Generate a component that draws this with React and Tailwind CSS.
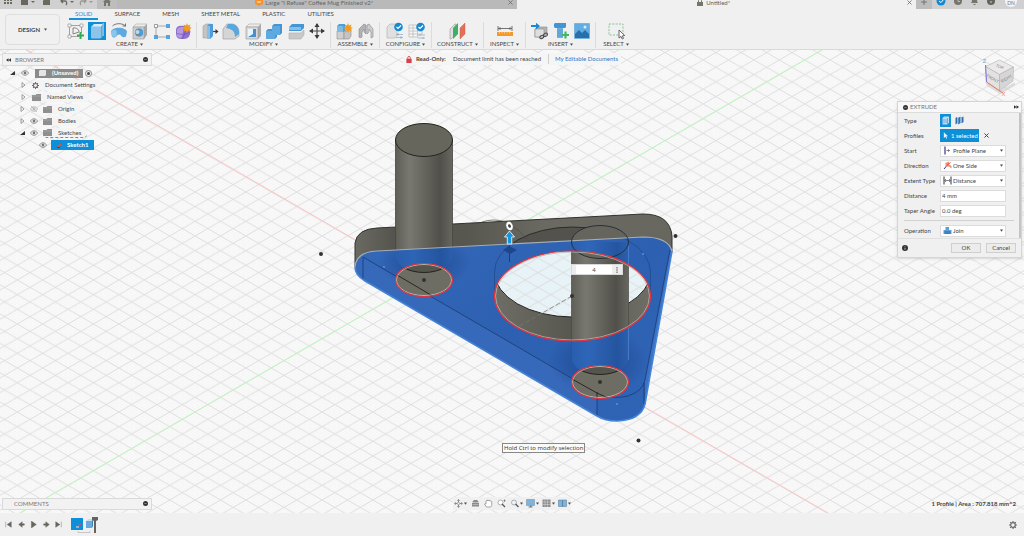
import React from "react";

const ICON = "h-[18px] w-[18px] shrink-0";

function Svg({ children, size = ICON, box = "0 0 18 18" }) {
  return (
    <svg viewBox={box} className={size} fill="none" aria-hidden="true">
      {children}
    </svg>
  );
}

function Caret() {
  return (
    <svg viewBox="0 0 4 3" className="h-[3px] w-[3px] shrink-0" aria-hidden="true">
      <path d="M0 0h4L2 3z" fill="#4b4b4b" />
    </svg>
  );
}

function Cross() {
  return (
    <svg viewBox="0 0 5 5" className="h-[5px] w-[5px]" aria-hidden="true">
      <path d="M.5.500l4 4M4.500.500l-4 4" stroke="#6b6860" strokeWidth=".8" />
    </svg>
  );
}

/* ---- ribbon icons ---- */
const icons = {
  sketch: (
    <Svg>
      <path d="M2.500 3.500v11M1 14.500h11M1 3.500h14M14.500 2v9" stroke="#8f8f8f" strokeWidth=".8" />
      <path d="M1 2h3v3H1zM13 2h3v3h-3zM1 13h3v3H1z" fill="#fafafa" stroke="#8a8a8a" strokeWidth=".6" />
      <path d="M6 12V6c3-.5 6 1 6 4z" stroke="#7b7b7b" strokeWidth=".9" />
      <path d="M13.500 10v7M10 13.500h7" stroke="#35a853" strokeWidth="2" />
    </Svg>
  ),
  extrude: (
    <Svg>
      <path d="M3 5l3-3h9l-2 3z" fill="#d8ecf9" />
      <path d="M13 5l2-3v12l-2 2.500z" fill="#5fa6d8" />
      <rect x="3" y="4.500" width="10" height="12" rx="1" fill="#8cc4ea" />
      <path d="M15.200 1v13" stroke="#eef7fd" strokeWidth=".7" />
    </Svg>
  ),
  revolve: (
    <Svg>
      <path d="M1 9.500C2 5 15 4 17 9.500l-1 5c-2 1-4 1-5-1-1-1.500-3-1.500-4 0-1 2-4 3-5 1z" fill="#5fa9de" />
      <path d="M1 10c2-3 5-3 6 0l-1 5-4-.5z" fill="#8cc5ec" />
      <path d="M2.500 4c3-3 9-3 12.500-.5M15.500 4.500V1.500M15.500 4h-3" stroke="#666" strokeWidth=".9" />
    </Svg>
  ),
  hole: (
    <Svg>
      <path d="M2 5l3-3h11l-3 3z" fill="#ededed" stroke="#9b9b9b" strokeWidth=".5" />
      <path d="M13 5l3-3v11l-3 4z" fill="#a8a8a8" />
      <path d="M2 5h11v12H2z" fill="#cecece" stroke="#9b9b9b" strokeWidth=".6" />
      <circle cx="8" cy="10.500" r="4" fill="#6a8ba3" />
      <path d="M8 6.500a4 4 0 0 1 0 8c1-2 1-6 0-8z" fill="#4a9eda" />
      <circle cx="6.500" cy="10" r="2" fill="#b9dbf1" />
    </Svg>
  ),
  rectPattern: (
    <Svg>
      <path d="M3 4h12M3 4v11M3 15h12" stroke="#959595" strokeWidth=".8" />
      <path d="M1.500 2.500h3v3h-3z" fill="#fff" stroke="#777" strokeWidth=".7" />
      <path d="M13 2h4v4h-4zM1 13h4v4H1zM13 13h4v4h-4z" fill="#58a3dc" />
    </Svg>
  ),
  form: (
    <Svg>
      <path d="M2 8c0-4 4-5 8-4 5 0 7 3 6 8-1 5-5 5-9 5-5 0-5-4-5-9z" fill="#9170cf" />
      <path d="M3 8c1-3 4-3 7-3-1 3-1 8-3 11-5 0-4-4-4-8z" fill="#b49ae4" />
      <path d="M2 11c4 2 9 2 14-1M10 4c2 4 1 9-2 13" stroke="#6e4db0" strokeWidth=".6" />
      <path d="M13 1l1 2.400 2.600-1-1 2.600 2.400 1-2.400 1 1 2.500-2.600-1-1 2.500-1-2.500-2.500 1 1-2.500-2.500-1 2.500-1-1-2.600 2.500 1z" fill="#f39a20" />
    </Svg>
  ),
  pressPull: (
    <Svg>
      <path d="M2 4l3-2h5v14H2z" fill="#c4c4c4" stroke="#999" strokeWidth=".5" />
      <path d="M6 4l2-2h4v12l-3 3H6z" fill="#4b9cd8" />
      <path d="M6 4h3v13H6z" fill="#86c0e8" />
      <path d="M12 9.500h3" stroke="#444" strokeWidth="1.200" />
      <path d="M14.500 7l3 2.500-3 2.500z" fill="#333" />
    </Svg>
  ),
  fillet: (
    <Svg>
      <path d="M1 7l4-5h5c4 0 7 4 7 8v4l-4 3H1z" fill="#d5d5d5" stroke="#999" strokeWidth=".6" />
      <path d="M6 2h4c4 0 7 4 7 8v2l-4 3c0-5-2-8-9-9z" fill="#5aa6de" />
    </Svg>
  ),
  shell: (
    <Svg>
      <path d="M2 5l3-3h12l-3 3z" fill="#ededed" stroke="#999" strokeWidth=".5" />
      <path d="M14 5l3-3v12l-3 3z" fill="#aaa" />
      <path d="M2 5h12v12H2z" fill="#d9d9d9" stroke="#999" strokeWidth=".6" />
      <path d="M4 7h8v8H4z" fill="#468fc9" />
      <path d="M4 7h5v5l-5 3z" fill="#e9f4fb" />
    </Svg>
  ),
  combine: (
    <Svg>
      <path d="M7 4l2-2h8v9l-2 2h-3v2l-2 2H1V9l2-2h4z" fill="#4595d3" />
      <path d="M1 9h6V4h8v9h-5v4H1z" fill="#5eaae0" />
    </Svg>
  ),
  split: (
    <Svg>
      <path d="M2 5l3-3h12v4l-3 3H2z" fill="#4796d4" />
      <path d="M2 5h12v3H2z" fill="#85c0e9" />
      <path d="M1 10h13l3-3" stroke="#efefef" strokeWidth="1" />
      <path d="M2 11h12l3-3v5l-3 4H2z" fill="#c9c9c9" stroke="#a5a5a5" strokeWidth=".5" />
    </Svg>
  ),
  move: (
    <Svg>
      <path d="M9 2v14M2 9h14" stroke="#4b4b4b" strokeWidth="1.200" />
      <path d="M9 1l2.500 4h-5zM9 17l2.500-4h-5zM1 9l4-2.500v5zM17 9l-4-2.500v5z" fill="#3b3b3b" />
    </Svg>
  ),
  component: (
    <Svg>
      <path d="M2 9h7v8H2z" fill="#cfcfcf" stroke="#8f8f8f" strokeWidth=".6" />
      <path d="M9 9h5l2-2v7l-2 3H9z" fill="#c4c4c4" stroke="#8f8f8f" strokeWidth=".6" />
      <path d="M2 4l2-2h6v7l-2 1H2z" fill="#4f9fd9" />
      <path d="M2 4h6v6H2z" fill="#7bbbe7" />
      <path d="M13 1l1 2.400 2.600-1-1 2.600 2.400 1-2.400 1 1 2.500-2.600-1-1 2.500-1-2.500-2.500 1 1-2.500-2.500-1 2.500-1-1-2.600 2.500 1z" fill="#f39a20" />
    </Svg>
  ),
  joint: (
    <Svg>
      <path d="M2 15V7l5-5 2 1v9l-2-2V7l-2 3v5l-2 1z" fill="#b3b3b3" stroke="#868686" strokeWidth=".6" />
      <path d="M16 15V7l-4-5-2 1v9l2-2V7l2 3v6z" fill="#cdcdcd" stroke="#868686" strokeWidth=".6" />
    </Svg>
  ),
  config: (
    <Svg>
      <path d="M1 5l3-3h7v11l-2 3H1z" fill="#e0e0e0" stroke="#b5b5b5" strokeWidth=".7" />
      <circle cx="12.500" cy="5" r="4.300" fill="#1788d2" />
      <path d="M10.500 5l1.500 1.500 3-3" stroke="#fff" strokeWidth="1.200" />
      <path d="M10 12.500h7M10 15.500h7M12 11v3M15 14v3" stroke="#8ba6bb" strokeWidth=".7" />
    </Svg>
  ),
  configTable: (
    <Svg>
      <path d="M1 3h13v12H1z" fill="#f6f6f6" stroke="#b5b5b5" strokeWidth=".7" />
      <path d="M1 6h13M1 9h13M1 12h13M5 3v12M9.500 3v12" stroke="#b5b5b5" strokeWidth=".7" />
      <circle cx="12.500" cy="5" r="4.300" fill="#1788d2" />
      <path d="M10.500 5l1.500 1.500 3-3" stroke="#fff" strokeWidth="1.200" />
      <path d="M10 12.500h7v4h-7z" fill="#f0f0f0" />
      <path d="M10 13h7M10 16h7M12 12v2M15 15v2" stroke="#8ba6bb" strokeWidth=".7" />
    </Svg>
  ),
  plane: (
    <Svg>
      <path d="M1 7l5-5h1v10l-5 5H1z" fill="#e0e0e0" stroke="#999" strokeWidth=".6" />
      <path d="M4 6l5-5v11l-5 5z" fill="#3fae66" />
      <path d="M11 6l5-5v11l-5 5z" fill="#e07057" stroke="#c9573d" strokeWidth=".4" />
    </Svg>
  ),
  measure: (
    <Svg>
      <path d="M2 4v5M16 4v5M2 6.500h14" stroke="#666" strokeWidth=".9" />
      <path d="M4.500 5L2 6.500 4.500 8M13.500 5L16 6.500 13.500 8" fill="#666" />
      <path d="M1 10h16v4H1z" fill="#f39a2b" />
      <path d="M3.500 10v1.500M6 10v1.500M8.500 10v1.500M11 10v1.500M13.500 10v1.500" stroke="#fbe0bb" strokeWidth=".6" />
    </Svg>
  ),
  insert: (
    <Svg>
      <path d="M4 7l2-2h10v7l-3 3H4z" fill="#b5b5b5" stroke="#8a8a8a" strokeWidth=".6" />
      <path d="M4 7h9v8H4z" fill="#dedede" stroke="#8a8a8a" strokeWidth=".6" />
      <path d="M0 3h5V.8L9 4 5 7.200V5H0z" fill="#168ad6" />
      <ellipse cx="10.800" cy="15" rx="2.200" ry="1.500" stroke="#4b4b4b" strokeWidth="1" transform="rotate(-30 10.800 15)" />
      <ellipse cx="14.500" cy="12.800" rx="2.200" ry="1.500" stroke="#4b4b4b" strokeWidth="1" transform="rotate(-30 14.500 12.800)" />
    </Svg>
  ),
  fastener: (
    <Svg>
      <path d="M2 2l1-1h11v4l-1 1H3L2 5z" fill="#4394d3" />
      <path d="M5 6h6v10H5z" fill="#6cb2e2" />
      <path d="M5 8h6M5 10h6M5 12h6M5 14h6" stroke="#4a8fc2" strokeWidth=".6" />
      <path d="M13.500 9.500v7M10 13h7" stroke="#43b864" strokeWidth="2.200" />
    </Svg>
  ),
  image: (
    <Svg>
      <path d="M1.500 1.500h15v15h-15z" fill="#62aee3" stroke="#4d9bd3" strokeWidth=".5" />
      <path d="M2 12l4-4 3 3 3-3 4 4v4H2z" fill="#2670ad" />
      <circle cx="12" cy="5" r="1.500" fill="#d9edf9" />
    </Svg>
  ),
  select: (
    <Svg>
      <path d="M2 2h14v11H2z" stroke="#6fb681" strokeWidth=".8" strokeDasharray="2 1.300" />
      <path d="M12 8v8l2-1.600 1.300 2.600 1.200-.6-1.200-2.500 2.400-.4z" fill="#fff" stroke="#555" strokeWidth=".9" />
    </Svg>
  ),
};

const groups = [
  { name: "CREATE", box: "w-[134px]", strip: "w-[126px]", items: ["sketch", "extrude", "revolve", "hole", "rectPattern", "form"] },
  { name: "MODIFY", box: "w-[134px]", strip: "w-[126px]", items: ["pressPull", "fillet", "shell", "combine", "split", "move"] },
  { name: "ASSEMBLE", box: "w-[49px]", strip: "w-10", items: ["component", "joint"] },
  { name: "CONFIGURE", box: "w-[52px]", strip: "w-10", items: ["config", "configTable"] },
  { name: "CONSTRUCT", box: "w-[52px]", strip: "w-[18px]", items: ["plane"] },
  { name: "INSPECT", box: "w-[42px]", strip: "w-[18px]", items: ["measure"] },
  { name: "INSERT", box: "w-[70px]", strip: "w-[60px]", items: ["insert", "fastener", "image"] },
  { name: "SELECT", box: "w-[40px]", strip: "w-[18px]", items: ["select"] },
];

function TitleBar() {
  return (
    <header className="flex h-[9px] shrink-0 overflow-hidden bg-[#d0d0d0] text-[#5c5c5c]">
      <div className="flex h-[5px] w-[97px] shrink-0 items-center pl-1">
        <svg viewBox="0 0 93 8" className="h-2 w-[93px]" aria-hidden="true">
          <g fill="#6b6860">
            <path d="M0 0h2v2H0zM3 0h2v2H3zM6 0h2v2H6zM0 3h2v2H0zM3 3h2v2H3zM6 3h2v2H6z" />
            <path d="M17 0h7v6h-7zM27 2h4l-2 2zM40 0h6v6h-7V2z" />
            <path d="M66 2h4l-2 2z" />
          </g>
          <path d="M57 2h4c2 0 2 3 1 4M59 0l-2 2 2 2" stroke="#6b6860" strokeWidth="1.300" fill="none" />
          <path d="M82 2h-4c-2 0-2 3-1 4M80 0l2 2-2 2" stroke="#9a9893" strokeWidth="1.300" fill="none" />
          <path d="M85 2h4l-2 2z" fill="#9a9893" />
        </svg>
      </div>
      <button aria-label="Home" className="flex h-[9px] w-5 shrink-0 justify-center bg-[#bdbdbd]">
        <svg viewBox="0 0 8 6" className="h-[6px] w-2" aria-hidden="true">
          <path d="M4 -2l4 4H7v4H5V3H3v3H1V2H0z" fill="#77746e" />
        </svg>
      </button>
      <div className="flex h-[9px] flex-1 bg-[#b9b9b9] px-1">
        <span className="flex h-[5px] flex-1 items-center justify-center gap-[2px] text-[#66635d]">
          <svg viewBox="0 0 8 8" className="h-2 w-2" aria-hidden="true">
            <path d="M0 1l4-2 4 2v4L4 7 0 5z" fill="#f5922e" />
            <path d="M2 2h4v2H2z" fill="#ffc27e" />
          </svg>
          Large "I Refuse" Coffee Mug Finished v2*
        </span>
        <button aria-label="Close tab" className="flex h-[5px] items-center"><Cross /></button>
      </div>
      <div className="flex h-[9px] flex-1 bg-[#f0f0f0] px-1">
        <span className="flex h-[5px] flex-1 items-center justify-center gap-[3px]">
          <svg viewBox="0 0 6 8" className="h-2 w-[6px]" aria-hidden="true">
            <path d="M0 3h6v4H0z" fill="#77746e" />
            <path d="M1.500 3V1.500a1.500 1.500 0 0 1 3 0V3" stroke="#77746e" fill="none" />
          </svg>
          Untitled*
        </span>
        <button aria-label="Close tab" className="flex h-[5px] items-center"><Cross /></button>
      </div>
      <button aria-label="New tab" className="flex h-[9px] w-4 shrink-0 justify-center bg-[#bdbdbd]">
        <svg viewBox="0 0 6 5" className="h-[5px] w-[6px]" aria-hidden="true">
          <path d="M3 -1v6M0 2h6" stroke="#77746e" strokeWidth="1" />
        </svg>
      </button>
      <svg viewBox="0 0 92 9" className="h-[9px] w-[92px] shrink-0" aria-hidden="true">
        <circle cx="9" cy="1" r="4.500" fill="#1788d2" />
        <path d="M7 1l2 1.500L12-1" stroke="#fff" fill="none" />
        <circle cx="26" cy="1" r="4" fill="#77746e" />
        <path d="M26-1v2.500h2" stroke="#d0d0d0" fill="none" strokeWidth=".8" />
        <path d="M39 3c1-1 1-3 1-5h5c0 2 0 4 1 5zM41.500 4h2v1h-2z" fill="#77746e" />
        <circle cx="59" cy="1" r="4" fill="#66635d" />
        <path d="M59 1v2" stroke="#d0d0d0" />
        <circle cx="79" cy="1" r="6" fill="#f3f3f3" />
        <text x="79" y="5" fontSize="5" textAnchor="middle" fill="#77746e">DN</text>
      </svg>
    </header>
  );
}

function Ribbon() {
  const tabs = ["SOLID", "SURFACE", "MESH", "SHEET METAL", "PLASTIC", "UTILITIES"];
  return (
    <div className="flex h-[41px] shrink-0 gap-[3px] border-b border-[#d9d9d9] bg-[#f0f0f0] pl-[5px]">
      <button className="mt-[5px] flex h-[31px] w-[55px] shrink-0 items-center justify-center gap-1 rounded-sm border border-[#dedede] font-bold">
        DESIGN <Caret />
      </button>
      <div className="flex flex-1 flex-col">
        <nav className="flex h-[11px] gap-[10px] pl-[6px]">
          {tabs.map((t, i) => (
            <a
              key={t}
              href="#"
              className={
                i === 0
                  ? "flex items-center border-b-2 border-[#1690d8] px-[6px] text-[#1690d8]"
                  : "flex items-center border-b-2 border-transparent px-[6px]"
              }
            >
              {t}
            </a>
          ))}
        </nav>
        <div className="flex pt-[2px]">
          {groups.map((g, i) => (
            <section
              key={g.name}
              className={
                (i < groups.length - 1 ? "border-r border-[#dcdcdc] " : "") +
                "flex h-[26px] shrink-0 flex-col items-center " +
                g.box
              }
            >
              <div className={"flex justify-between " + g.strip}>
                {g.items.map((n) => (
                  <button
                    key={n}
                    aria-label={n}
                    className={n === "extrude" ? "h-[18px] bg-[#0f8fd8]" : "h-[18px]"}
                  >
                    {icons[n]}
                  </button>
                ))}
              </div>
              <button className="flex h-2 items-center gap-[2px] whitespace-nowrap">
                {g.name} <Caret />
              </button>
            </section>
          ))}
        </div>
      </div>
    </div>
  );
}

function SceneDefs() {
  return (
    <defs>
      <pattern id="minor" patternUnits="userSpaceOnUse" x="17.300" y="309.300" width="5.080" height="2.934">
        <path d="M0 0l5.080 2.934M0 2.934L5.080 0" stroke="#eeeeee" strokeWidth=".4" />
      </pattern>
      <pattern id="major" patternUnits="userSpaceOnUse" x="17.300" y="309.300" width="25.400" height="14.670">
        <path d="M0 0l25.400 14.670M0 14.670L25.400 0" stroke="#dadada" strokeWidth=".9" />
      </pattern>
      <linearGradient id="cyl" x1="0" x2="1">
        <stop offset="0" stopColor="#5f5e57" />
        <stop offset=".25" stopColor="#787870" />
        <stop offset=".5" stopColor="#66655e" />
        <stop offset=".78" stopColor="#504f49" />
        <stop offset="1" stopColor="#67665f" />
      </linearGradient>
      <linearGradient id="cylBlue" x1="0" x2="1">
        <stop offset="0" stopColor="#2a5fb0" />
        <stop offset=".3" stopColor="#2f68ba" />
        <stop offset=".8" stopColor="#24549f" />
        <stop offset="1" stopColor="#2c5fae" />
      </linearGradient>
      <linearGradient id="plate" x1="0" x2="1">
        <stop offset="0" stopColor="#6b6a62" />
        <stop offset=".12" stopColor="#55544e" />
        <stop offset=".35" stopColor="#57564f" />
        <stop offset=".6" stopColor="#6b6a62" />
        <stop offset="1" stopColor="#68675f" />
      </linearGradient>
      <linearGradient id="face" x1="0" y1="0" x2="1" y2="1">
        <stop offset="0" stopColor="#3468b8" />
        <stop offset=".5" stopColor="#2d60b0" />
        <stop offset="1" stopColor="#2f64b6" />
      </linearGradient>
      <linearGradient id="rim" x1="0" x2="1">
        <stop offset="0" stopColor="#706f67" />
        <stop offset=".5" stopColor="#58574f" />
        <stop offset="1" stopColor="#706f67" />
      </linearGradient>
      <radialGradient id="shade">
        <stop offset=".5" stopColor="#1d478f" stopOpacity=".5" />
        <stop offset="1" stopColor="#1d478f" stopOpacity="0" />
      </radialGradient>
      <clipPath id="holeBig"><ellipse cx="572.500" cy="296" rx="78" ry="45" /></clipPath>
      <clipPath id="holeTop"><ellipse cx="572.500" cy="272" rx="78" ry="45" /></clipPath>
      <clipPath id="holeL"><ellipse cx="424" cy="280" rx="28.500" ry="16.500" /></clipPath>
      <clipPath id="holeR"><ellipse cx="600" cy="382" rx="28.500" ry="16.500" /></clipPath>
      <clipPath id="blueClip">
        <path d="M355 267Q356 252 377 251L643 237Q668 237 672 251L645 404Q641 420 617 421Q605 421 597 416L365 281Q355 275 355 267Z" />
      </clipPath>
      <clipPath id="grayClip">
        <path d="M355 243Q357 229 377 228L643 214Q670 214 672 236V260L643 237L377 251L355 267Z" />
      </clipPath>
    </defs>
  );
}

function Scene() {
  const blue = "M355 267Q356 252 377 251L643 237Q668 237 672 251L645 404Q641 420 617 421Q605 421 597 416L365 281Q355 275 355 267Z";
  return (
    <svg
      viewBox="0 50 1024 463"
      preserveAspectRatio="xMidYMid slice"
      className="absolute inset-0 h-full w-full"
      fill="none"
      role="img"
      aria-label="3D model view"
    >
      <SceneDefs />
      <rect y="50" width="1024" height="463" fill="#fbfbfb" />
      <rect y="50" width="1024" height="463" fill="url(#minor)" />
      <rect y="50" width="1024" height="463" fill="url(#major)" />
      <path d="M822 50L20 513" stroke="#bdf7bd" strokeWidth="1" />
      <path d="M27 50L828 513" stroke="#fbc4c4" strokeWidth="1" />

      {/* upper plate */}
      <path d="M355 267V243Q357 229 377 228L643 214Q670 214 672 236V252L600 270L377 262Z" fill="url(#plate)" />
      <g clipPath="url(#grayClip)">
        <ellipse cx="572.500" cy="272" rx="78" ry="45" fill="#53524c" stroke="#2d2c29" />
        <ellipse cx="600" cy="242" rx="28.500" ry="16.500" fill="#66655d" />
      </g>
      <path d="M355 267V243Q357 229 377 228L643 214Q670 214 672 236V252" stroke="#33322e" strokeWidth="1" />
      <path d="M482 222Q493 218 506 222Q520 229 529 242" stroke="#4a4a46" strokeWidth=".7" />

      {/* left post */}
      <path d="M395.500 140V252h57V140z" fill="url(#cyl)" />
      <path d="M395.500 140V252M452.500 140V252" stroke="#45443f" strokeWidth=".8" />
      <ellipse cx="424" cy="140" rx="28.500" ry="16.500" fill="#66665d" stroke="#24231f" />

      {/* selected lower face */}
      <path d={blue} fill="url(#face)" />
      <g clipPath="url(#blueClip)">
        <path d="M363 257L597 393L597 425L355 285V255Z" fill="#3769bb" />
        <path d="M645 380L670 250L680 240V430H645Z" fill="#3a72c6" />
        <ellipse cx="424" cy="262" rx="46" ry="28" fill="url(#shade)" />
        <ellipse cx="598" cy="362" rx="50" ry="34" fill="url(#shade)" />
        <path d="M395.500 240V256A28.500 16.500 0 0 0 452.500 256V240z" fill="url(#cylBlue)" opacity=".8" />
        <path d="M571.500 242V358A28.500 16.500 0 0 0 628.500 358V242z" fill="url(#cylBlue)" opacity=".9" />
        <path d="M628.500 245V360" stroke="#4b82cf" strokeWidth=".8" />
        <path d="M571.500 330V362" stroke="#24549f" strokeWidth=".6" />
        <path d="M494.500 296V272A78 45 0 0 1 650.500 272V296" stroke="#1d478a" strokeWidth=".7" />
        <path d="M363 257V281M363 257L597 393Q611 400 628 396Q643 391 645 380L670 250M597 392V417M644 383V404" stroke="#1b3b72" strokeWidth=".8" />
        <path d="M509.500 243V262" stroke="#1b3e7c" strokeWidth="1" />
        <path d="M503 250l6-4 8 4-7 4z" fill="#1d468d" />
      </g>
      <path d="M355 267Q356 252 377 251L643 237Q668 237 672 251" stroke="#a4aeb6" strokeWidth="1.200" />
      <path d="M672 251L645 404Q641 420 617 421Q605 421 597 416L365 281Q355 275 355 267" stroke="#4583d6" strokeWidth="1.600" />

      {/* large opening */}
      <g clipPath="url(#holeBig)">
        <rect x="490" y="245" width="165" height="100" fill="url(#rim)" />
        <g clipPath="url(#holeTop)">
          <rect x="490" y="245" width="165" height="80" fill="#e8f3f7" />
          <rect x="490" y="245" width="165" height="80" fill="url(#major)" />
        </g>
        <ellipse cx="572.500" cy="272" rx="78" ry="45" stroke="#24231f" />
        <path d="M571.500 242h57V345h-57z" fill="url(#cyl)" />
        <path d="M571.500 242V345M628.500 242V345" stroke="#4a4943" strokeWidth=".7" />
        <path d="M571.500 242A28.500 16.500 0 0 0 628.500 242z" fill="#66665d" />
      </g>
      <ellipse cx="600" cy="242" rx="28.500" ry="16.500" stroke="#222a33" strokeWidth=".9" />
      <path d="M572 296L516 328" stroke="#77776f" strokeWidth=".8" strokeDasharray="5 2" />
      <ellipse cx="572.500" cy="296" rx="77" ry="44" stroke="#b9b7b0" strokeWidth=".8" />
      <ellipse cx="572.500" cy="296" rx="78" ry="45" stroke="#e5323f" strokeWidth="1.200" />

      {/* small openings */}
      <g clipPath="url(#holeL)">
        <rect x="390" y="260" width="70" height="40" fill="#6e6d64" />
        <ellipse cx="424" cy="256" rx="28.500" ry="16.500" fill="#55544d" stroke="#24231f" />
        <path d="M397 275L436 298" stroke="#282723" />
      </g>
      <g clipPath="url(#holeR)">
        <rect x="565" y="360" width="70" height="40" fill="#6e6d64" />
        <ellipse cx="600" cy="358" rx="28.500" ry="16.500" fill="#55544d" stroke="#24231f" />
        <path d="M572 379L597 393L608 398M597 392V400" stroke="#282723" />
      </g>
      <g strokeWidth=".8" stroke="#c9c6be">
        <ellipse cx="424" cy="280" rx="27.500" ry="15.500" />
        <ellipse cx="600" cy="382" rx="27.500" ry="15.500" />
      </g>
      <g strokeWidth="1.200" stroke="#e5323f">
        <ellipse cx="424" cy="280" rx="28.500" ry="16.500" />
        <ellipse cx="600" cy="382" rx="28.500" ry="16.500" />
      </g>
      <g fill="#33322f">
        <circle cx="321" cy="254" r="2" />
        <circle cx="675.500" cy="236" r="2" />
        <circle cx="572" cy="296" r="2" />
        <circle cx="638.500" cy="440.500" r="2" />
        <circle cx="424" cy="280" r="2" />
        <circle cx="600" cy="382" r="2" />
      </g>
      <g fill="#5a92dd">
        <circle cx="384" cy="267" r="1" />
        <circle cx="643" cy="254" r="1" />
        <circle cx="617" cy="404" r="1" />
      </g>

      {/* manipulator */}
      <g transform="rotate(-20 509.500 226)">
        <ellipse cx="509.500" cy="226" rx="3.600" ry="4.800" fill="#fff" stroke="#444" strokeWidth=".6" />
        <ellipse cx="509.500" cy="226" rx="1.300" ry="1.900" fill="#44433f" />
      </g>
      <path d="M509.500 231l5 6h-2.800v7h-4.400v-7h-2.800z" fill="#1496e6" stroke="#fff" strokeWidth=".8" />
    </svg>
  );
}

function ViewCube() {
  return (
    <svg viewBox="0 0 38 44" className="h-[44px] w-[38px]" fill="none" aria-label="View cube">
      <path d="M6 29l15 9 15-9v3l-15 9L8 33z" fill="#c9c9c9" opacity=".6" />
      <path d="M20.500 7l14 7-14 7.500-14-8z" fill="#eaeaea" stroke="#b2b2b2" strokeWidth=".6" />
      <path d="M6.500 13.500l14 8V38l-13-9z" fill="#e2e2e2" stroke="#b2b2b2" strokeWidth=".6" />
      <path d="M34.500 14l-14 7.500V38L34 28z" fill="#d6d6d6" stroke="#b2b2b2" strokeWidth=".6" />
      <text x="20.500" y="15" fontSize="4" fill="#7d7d7d" textAnchor="middle" transform="rotate(25 20.500 14)">TOP</text>
      <text x="13.500" y="27" fontSize="4" fill="#7d7d7d" textAnchor="middle" transform="rotate(30 13.500 26)">FRONT</text>
      <text x="27.500" y="27" fontSize="4" fill="#7d7d7d" textAnchor="middle" transform="rotate(-30 27.500 26)">RIGHT</text>
      <path d="M7.500 29L6.500 12" stroke="#8a6be0" strokeWidth="1" />
      <path d="M7.500 29L24 40" stroke="#e8775c" strokeWidth="1" />
      <text x="3.500" y="10" fontSize="6" fill="#6ba7dd">Z</text>
      <text x="22.500" y="43" fontSize="6" fill="#f08c78">X</text>
    </svg>
  );
}

function Dot() {
  return (
    <svg viewBox="0 0 6 6" className="h-[5px] w-[5px] shrink-0" aria-hidden="true">
      <circle cx="3" cy="3" r="3" fill="#333" />
      <path d="M1.500 3h3" stroke="#ccc" strokeWidth=".6" />
    </svg>
  );
}

function Chevrons({ flip }) {
  return (
    <svg viewBox="0 0 6 4" className="h-[4px] w-[5px] shrink-0" aria-hidden="true">
      <path d={flip ? "M0 0l3 2-3 2zM3 0l3 2-3 2z" : "M3 0L0 2l3 2zM6 0L3 2l3 2z"} fill="#333" />
    </svg>
  );
}

function Arrow({ open }) {
  return (
    <svg viewBox="0 0 5 6" className="h-[6px] w-[5px] shrink-0" fill="none" aria-hidden="true">
      {open ? <path d="M5 1v4H0z" fill="#333" /> : <path d="M1 .5L4 3 1 5.500z" stroke="#888" strokeWidth=".8" />}
    </svg>
  );
}

function Eye({ off }) {
  return (
    <svg viewBox="0 0 8 6" className="h-[6px] w-2 shrink-0" fill="none" aria-hidden="true">
      <path d="M.5 3C2 0 6 0 7.500 3 6 6 2 6 .5 3z" stroke={off ? "#b5b5b5" : "#8a8a8a"} strokeWidth=".9" />
      <circle cx="4" cy="3" r="1.400" fill={off ? "#bbb" : "#777"} />
      {off && <path d="M1 0l6 6" stroke="#aaa" strokeWidth=".7" />}
    </svg>
  );
}

function Folder() {
  return (
    <svg viewBox="0 0 9 7" className="h-[7px] w-[9px] shrink-0" aria-hidden="true">
      <path d="M0 1h3.500l1-1H9v7H0z" fill="#8f8f8f" />
      <path d="M0 2h9" stroke="#b5b5b5" strokeWidth=".5" />
    </svg>
  );
}

function Gear({ size = "h-[7px] w-[7px] shrink-0" }) {
  return (
    <svg viewBox="0 0 8 8" className={size} fill="none" aria-hidden="true">
      <path d="M4 0v8M0 4h8M1.200 1.200l5.600 5.600M6.800 1.200L1.200 6.800" stroke="#6c6c6c" strokeWidth="1.200" />
      <circle cx="4" cy="4" r="2.300" fill="#f2f2f2" stroke="#6c6c6c" strokeWidth="1.200" />
    </svg>
  );
}

function Browser() {
  const row = "flex h-3 items-center";
  const label = "flex h-[10px] items-center rounded-sm bg-[#f4f4f4] pr-[6px]";
  return (
    <aside className="w-[150px]">
      <div className="flex h-[13px] items-center border border-[#dadada] bg-[#f2f2f2] px-[3px] text-[#777]">
        <Chevrons />
        <h2 className="flex-1 pl-1">BROWSER</h2>
        <Dot />
      </div>
      <ul className="pt-px">
        <li className={row + " gap-[6px] pl-2"}>
          <Arrow open />
          <Eye />
          <span className="flex h-[9px] items-center gap-[6px] bg-[#8b8b8b] pl-1 pr-[5px] font-bold text-white">
            <svg viewBox="0 0 7 6" className="h-[6px] w-[7px]" aria-hidden="true">
              <path d="M0 1l1-1h6v5L6 6H0z" fill="#e5e5e5" />
            </svg>
            (Unsaved)
          </span>
          <input type="radio" defaultChecked aria-label="Activate (Unsaved)" className="-ml-1 h-[7px] w-[7px] appearance-none rounded-full border border-[#888] bg-[#444] bg-clip-content p-px" />
        </li>
        <li className={row + " gap-[6px] pl-[19px]"}>
          <Arrow />
          <span className={label + " gap-[6px]"}><Gear />Document Settings</span>
        </li>
        <li className={row + " gap-[6px] pl-[19px]"}>
          <Arrow />
          <span className={label + " gap-[6px]"}><Folder />Named Views</span>
        </li>
        <li className={row + " gap-[5px] pl-[18px]"}>
          <Arrow />
          <Eye off />
          <span className={label + " gap-[6px]"}><Folder />Origin</span>
        </li>
        <li className={row + " gap-[5px] pl-[18px]"}>
          <Arrow />
          <Eye />
          <span className={label + " gap-[6px]"}><Folder />Bodies</span>
        </li>
        <li className={row + " gap-[5px] pl-[18px]"}>
          <Arrow open />
          <Eye />
          <span className={label + " gap-[6px] border-b border-dashed border-[#888]"}><Folder />Sketches</span>
        </li>
        <li className={row + " gap-1 pl-[37px]"}>
          <Eye />
          <span className="flex h-[10px] items-center gap-[5px] bg-[#0f8fd8] pl-[6px] pr-[6px] font-bold text-white">
            <svg viewBox="0 0 5 6" className="h-[6px] w-[5px]" fill="none" aria-hidden="true">
              <path d="M1 5l3-3" stroke="#e5533d" strokeWidth="1.200" />
              <path d="M0 5.500h3" stroke="#1d4470" strokeWidth=".8" />
            </svg>
            Sketch1
          </span>
        </li>
      </ul>
    </aside>
  );
}

function Field({ label, id, children }) {
  return (
    <div className="flex h-[15px] items-center">
      <label htmlFor={id} className="w-9 shrink-0">{label}</label>
      {children}
    </div>
  );
}

function Drop({ id, value, icon }) {
  return (
    <div className="flex h-3 w-[66px] items-center gap-px border border-[#dcdcdc] bg-white px-[2px]">
      {icon}
      <select id={id} className="min-w-0 flex-1 appearance-none bg-transparent">
        <option>{value}</option>
      </select>
      <Caret />
    </div>
  );
}

const SMALL = "h-[9px] w-[9px] shrink-0";

function ExtrudePanel() {
  return (
    <form className="w-[125px] border border-[#d5d5d5] bg-[#f0f0f0] shadow-sm">
      <div className="flex h-[11px] items-center gap-[2px] border-b border-[#dcdcdc] bg-[#f8f8f8] pl-[5px] pr-[2px] text-[#777]">
        <Dot />
        <h2 className="flex-1">EXTRUDE</h2>
        <Chevrons flip />
      </div>
      <div className="border-r-2 border-[#c4c4c4] pl-[6px]">
        <Field label="Type" id="type">
          <button type="button" id="type" aria-label="Solid" className="flex h-[13px] w-[11px] items-center justify-center bg-[#0f8fd8]">
            <Svg size={SMALL}><path d="M3 4l3-3h10v12l-3 4H3z" fill="#b9dcf4" /><path d="M3 8h10M3 12h10M13 4v12" stroke="#4394d3" strokeWidth="1.200" /></Svg>
          </button>
          <button type="button" aria-label="Thin" className="ml-[4px] flex h-[13px] w-[11px] items-center">
            <Svg size={SMALL}><path d="M1 4l3-2v13l-3 2zM6 4l5-3v13l-5 3zM13 3l4-2v11l-4 3z" fill="#2f6fae" /><path d="M4 3h3v12H4zM11 2h3v10h-3z" fill="#85b9e2" /></Svg>
          </button>
        </Field>
        <Field label="Profiles" id="profiles">
          <button type="button" id="profiles" className="flex h-[13px] w-[39px] items-center gap-[3px] bg-[#0f8fd8] pl-[3px] text-white">
            <svg viewBox="0 0 6 8" className="h-[7px] w-[5px]" aria-hidden="true"><path d="M1 0l5 5H4l1 2.500-1 .5-1-2.500L1 7z" fill="#e7f3fb" /></svg>
            1 selected
          </button>
          <button type="button" aria-label="Clear profiles" className="ml-[5px]">
            <svg viewBox="0 0 5 5" className="h-[5px] w-[5px]"><path d="M.5.500l4 4M4.500.500l-4 4" stroke="#444" strokeWidth="1" /></svg>
          </button>
        </Field>
        <Field label="Start" id="start">
          <Drop id="start" value="Profile Plane" icon={<Svg size={SMALL}><path d="M4 1v16" stroke="#3d3480" strokeWidth="2.400" /><path d="M7 9h7M11 6.500v5" stroke="#666" strokeWidth="1.600" /></Svg>} />
        </Field>
        <Field label="Direction" id="direction">
          <Drop id="direction" value="One Side" icon={<Svg size={SMALL}><path d="M2 16l6-7" stroke="#3d3480" strokeWidth="2" /><path d="M5 4l7-3v6l5 3v5l-5-4H5z" fill="#f08c70" /><path d="M8 9l7-6" stroke="#d9503a" strokeWidth="2" /></Svg>} />
        </Field>
        <Field label="Extent Type" id="extent">
          <Drop id="extent" value="Distance" icon={<Svg size={SMALL}><path d="M2 1v16M16 1v16" stroke="#333" strokeWidth="2" /><path d="M3 9h12M6 6L3 9l3 3M12 6l3 3-3 3" stroke="#666" strokeWidth="1.600" /></Svg>} />
        </Field>
        <Field label="Distance" id="distance">
          <input id="distance" defaultValue="4 mm" className="h-3 w-[66px] border border-[#dcdcdc] bg-white px-px" />
        </Field>
        <Field label="Taper Angle" id="taper">
          <input id="taper" defaultValue="0.0 deg" className="h-3 w-[66px] border border-[#dcdcdc] bg-white px-px" />
        </Field>
        <div className="mr-[5px] mt-[2px] border-t border-[#d0d0d0] pt-[2px]">
          <Field label="Operation" id="operation">
            <Drop id="operation" value="Join" icon={<Svg size={SMALL}><path d="M5 2h7v6h5v8H1V8h4z" fill="#5a9fd6" /><path d="M3 10h12v6H3z" fill="#3c83bf" /></Svg>} />
          </Field>
        </div>
      </div>
      <div className="flex h-[19px] items-center gap-[5px] border-t border-[#e0e0e0] pl-1 pr-[5px]">
        <Svg size="h-[6px] w-[6px] shrink-0"><circle cx="9" cy="9" r="9" fill="#333" /><path d="M9 8v6M9 4v2" stroke="#fff" strokeWidth="2" /></Svg>
        <button type="button" className="ml-auto h-[10px] w-[30px] border border-[#cfcfcf] bg-[#ececec]">OK</button>
        <button type="button" className="h-[10px] w-[30px] border border-[#cfcfcf] bg-[#ececec]">Cancel</button>
      </div>
    </form>
  );
}

function NavBar() {
  const s = "h-[9px] w-[9px] shrink-0";
  const b = "flex w-[9px] items-center";
  const w = "flex w-[12px] items-center gap-px";
  return (
    <div className="flex h-[13px] items-center gap-1 bg-[#f0f0f0] px-px">
      <button aria-label="Orbit" className="flex w-[13px] items-center gap-px">
        <Svg size={s}><path d="M9 2v14M2 9h14" stroke="#888" strokeWidth="2" /><path d="M9 0l3 4H6zM9 18l3-4H6zM0 9l4-3v6zM18 9l-4-3v6z" fill="#888" /><circle cx="9" cy="9" r="2.500" fill="#f0f0f0" stroke="#777" /></Svg>
        <Caret />
      </button>
      <button aria-label="Look at" className={b}><Svg size={s}><path d="M3 5l3-3h6l3 3v2H3zM2 8h14v7H2z" fill="#8a8a8a" /><path d="M3 11h12" stroke="#ddd" /></Svg></button>
      <button aria-label="Pan" className={b}><Svg size={s}><path d="M5 16l-4-6c1-2 3 0 3 0V4c1-2 2-1 2.500 0 0-3 2.500-3 3 0 .5-2 2.500-2 2.800.5C13 3 15 3 15.500 6v5c0 3-2 5-2 5z" fill="#fff" stroke="#888" strokeWidth="1.500" /></Svg></button>
      <button aria-label="Zoom" className={b}><Svg size={s}><circle cx="7" cy="7" r="5" fill="#fff" stroke="#999" strokeWidth="1.500" /><path d="M10 10l6 6" stroke="#555" strokeWidth="2.500" /><path d="M15 1v5M13 3h4" stroke="#666" strokeWidth="1.300" /></Svg></button>
      <button aria-label="Fit" className={w}><Svg size={s}><circle cx="8" cy="7" r="5" fill="#e7f2f9" stroke="#999" strokeWidth="1.500" /><path d="M11 10l6 6" stroke="#555" strokeWidth="2.500" /></Svg><Caret /></button>
      <button aria-label="Display settings" className={w}><Svg size={s}><path d="M1 1h16v12H1z" fill="#7fb3da" stroke="#6a8ba5" /><path d="M5 15h8v2H5zM8 13h3v3H8z" fill="#777" /></Svg><Caret /></button>
      <button aria-label="Grid settings" className={w}><Svg size={s}><path d="M1 1h16v15H1z" fill="#8c8c8c" /><path d="M1 6h16M1 11h16M6 1v15M11 1v15" stroke="#ddd" /></Svg><Caret /></button>
      <button aria-label="Viewports" className={w}><Svg size={s}><path d="M1 2h16v13H1z" fill="#7fb3da" stroke="#4f7491" /><path d="M9 3v12" stroke="#4f7491" strokeWidth="1.500" /></Svg><Caret /></button>
    </div>
  );
}

function Timeline() {
  const controls = [
    ["First", "M1 1v8M9 1L3 5l6 4z"],
    ["Back", "M6 1L1 5l5 4V6h3V4H6z"],
    ["Play", "M2 0l7 5-7 5z"],
    ["Forward", "M4 1l5 4-5 4V6H1V4h3z"],
    ["Last", "M9 1v8M1 1l6 4-6 4z"],
  ];
  return (
    <footer className="flex h-[23px] shrink-0 items-center bg-[#f0f0f0] pl-[5px] pr-[7px]">
      <div className="flex w-[57px] justify-between">
        {controls.map(([name, d]) => (
          <button key={name} aria-label={name} className="flex w-[7px] justify-center">
            <svg viewBox="0 0 10 10" className="h-[7px] w-[7px]"><path d={d} fill="#66665f" stroke="#66665f" strokeWidth=".6" /></svg>
          </button>
        ))}
      </div>
      <svg viewBox="0 0 28 18" className="ml-[9px] h-[18px] w-[28px]" fill="none" aria-label="Timeline features">
        <path d="M0 2h12v12H0z" fill="#0f8fd8" />
        <path d="M6.500 11l3-3" stroke="#e5533d" strokeWidth="1.500" />
        <path d="M5 11h3" stroke="#d9e9f5" />
        <path d="M7 15v1.500h12V15" stroke="#bdbdbd" strokeWidth=".8" />
        <path d="M15 5l2-2h6l-1 2z" fill="#c0dff4" />
        <path d="M15 5h6v7h-6z" fill="#67aade" />
        <path d="M21 5l1-2v7l-1 2z" fill="#3d81b9" />
        <path d="M21 1h6v3l-2 1v12h-2V5l-2-1z" fill="#66635d" />
      </svg>
      <button aria-label="Settings" className="ml-auto"><Gear size="h-2 w-2" /></button>
    </footer>
  );
}

export default function App() {
  return (
    <div className="flex h-screen flex-col overflow-hidden bg-[#f0f0f0] font-['Lato','Liberation_Sans',sans-serif] text-[6px] leading-[8px] text-[#454545]">
      <TitleBar />
      <Ribbon />
      <main className="relative flex min-h-0 flex-1 flex-col justify-between px-[2px] pb-[3px] pt-[3px]">
        <Scene />
        <div className="relative grid grid-cols-[1fr_auto_1fr] items-start">
          <Browser />
          <div className="flex h-3 items-center gap-[7px] bg-[#f5f5f5] px-[3px]">
            <span className="flex items-center gap-[4px] font-bold">
              <svg viewBox="0 0 6 8" className="h-[7px] w-[6px]" fill="none" aria-hidden="true">
                <path d="M0 3h6v5H0z" fill="#d6404a" />
                <path d="M1.500 3V2a1.500 1.500 0 0 1 3 0v1" stroke="#d6404a" />
              </svg>
              Read-Only:
            </span>
            <span>Document limit has been reached</span>
            <a href="#" className="border-l border-[#cfcfcf] py-px pl-[6px] text-[#1f7cc7]">My Editable Documents</a>
          </div>
          <div className="flex flex-col items-end">
            <div className="pr-[5px]"><ViewCube /></div>
            <div className="pt-1"><ExtrudePanel /></div>
          </div>
        </div>

        <div className="absolute left-[calc(50%+59px)] top-[214px] flex h-[11px] w-[52px] items-center border border-[#d8d8d8] bg-[#ececec]">
          <input aria-label="Extrude distance" defaultValue="4" className="ml-1 h-[9px] w-9 bg-white text-center" />
          <button aria-label="More" className="flex flex-1 justify-center">
            <svg viewBox="0 0 2 8" className="h-[6px] w-[2px]"><path d="M0 0h2v2H0zM0 3h2v2H0zM0 6h2v2H0z" fill="#888" /></svg>
          </button>
        </div>
        <div className="absolute left-[calc(50%-10px)] top-[393px] whitespace-nowrap border border-[#888] bg-[#fafafa] px-px font-['Open_Sans','Noto_Sans',sans-serif] text-[#333]">
          Hold Ctrl to modify selection
        </div>

        <div className="relative grid grid-cols-[1fr_auto_1fr] items-center">
          <div className="flex h-[12px] w-[150px] items-center border border-[#dadada] bg-[#f2f2f2] pl-[11px] pr-[3px] text-[#777]">
            <h2 className="flex-1">COMMENTS</h2>
            <Dot />
          </div>
          <NavBar />
          <p className="pr-[6px] text-right font-bold">1 Profile | Area : 707.818 mm^2</p>
        </div>
      </main>
      <Timeline />
    </div>
  );
}
